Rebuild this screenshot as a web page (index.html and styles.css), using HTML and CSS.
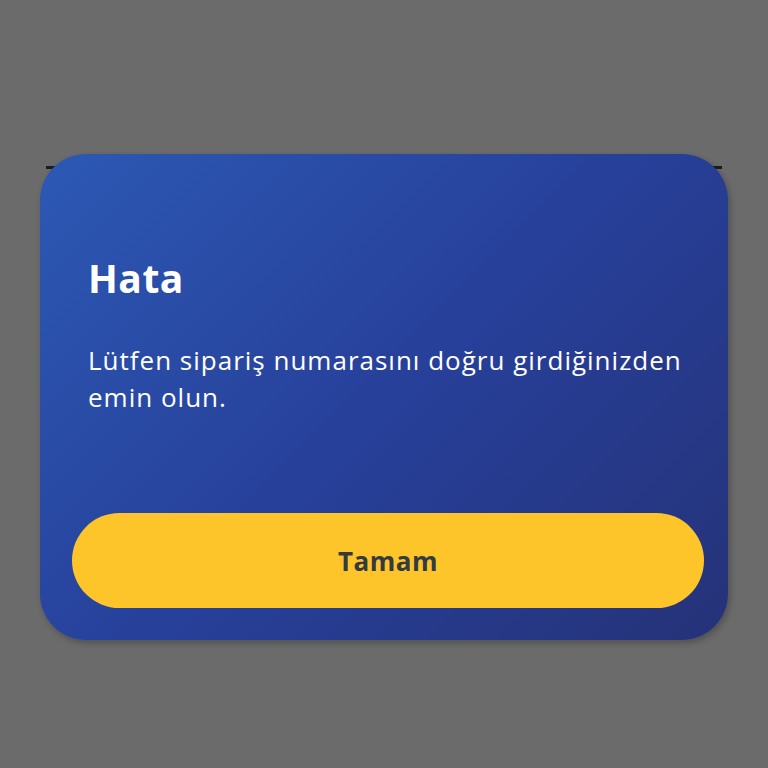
FILE: index.html
```html
<!DOCTYPE html>
<html lang="tr">
<head>
    <meta charset="UTF-8">
    <meta name="viewport" content="width=device-width, initial-scale=1.0">
    <title>Hata</title>
    <link rel="stylesheet" href="styles.css">
</head>
<body>
    <div class="page">
        <div class="page-divider"></div>
    </div>

    <div class="dialog">
        <div class="dialog-body">
            <h2 class="dialog-title">Hata</h2>
            <p class="dialog-text">Lütfen sipariş numarasını doğru girdiğinizden emin olun.</p>
        </div>
        <button class="dialog-button">Tamam</button>
    </div>
</body>
</html>
```

FILE: styles.css
```css
body, html {
    margin: 0;
    padding: 0;
    height: 100%;
    font-family: "Open Sans", Lato, sans-serif;
    background-color: #6b6b6b;
}
.page {
    height: 100%;
    padding-top: 166px;
    box-sizing: border-box;
}
.page-divider {
    height: 3px;
    margin: 0 46px;
    background-color: #1c1c1c;
}
.dialog {
    position: absolute;
    left: 40px;
    top: 154px;
    width: 688px;
    height: 486px;
    box-sizing: border-box;
    padding: 0 24px 32px 32px;
    border-radius: 46px;
    display: flex;
    flex-direction: column;
    background: linear-gradient(135deg, #2c59b4 0%, #27409a 50%, #253278 100%);
    box-shadow: 2px 3px 6px rgba(0, 0, 0, 0.25);
}
.dialog-body {
    flex-grow: 1;
    padding: 0 8px 0 16px;
    color: white;
}
.dialog-title {
    margin: 100px 0 0;
    font-size: 39px;
    font-weight: 700;
    line-height: 48px;
    letter-spacing: 0.5px;
}
.dialog-text {
    margin: 40px 0 0;
    font-size: 26px;
    line-height: 37px;
    letter-spacing: 1px;
}
.dialog-button {
    height: 95px;
    border: none;
    border-radius: 48px;
    background-color: #fec52b;
    color: #333a40;
    font-family: inherit;
    font-size: 26px;
    font-weight: 700;
    letter-spacing: 0.5px;
    cursor: pointer;
}
```
